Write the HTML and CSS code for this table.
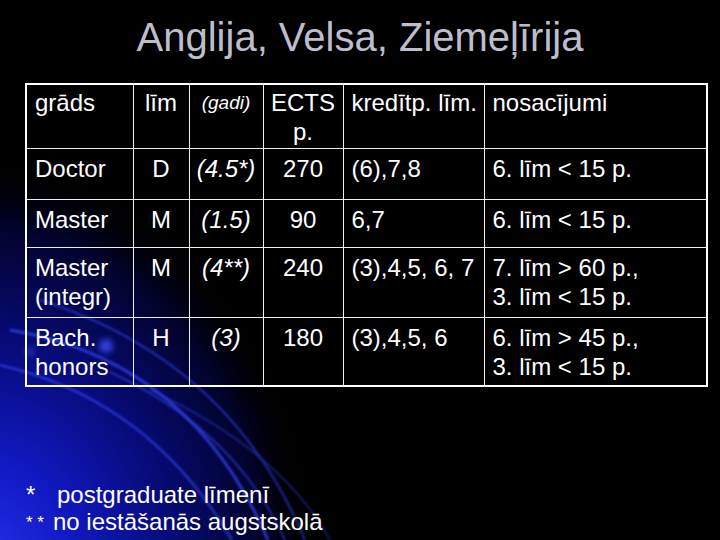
FILE: index.html
```html
<!DOCTYPE html>
<html lang="lv">
<head>
<meta charset="utf-8">
<title>Anglija, Velsa, Ziemeļīrija</title>
<link rel="stylesheet" href="styles.css">
</head>
<body>
<div class="slide">
  <svg class="backdrop" width="720" height="540" viewBox="0 0 720 540" aria-hidden="true">
    <defs>
      <radialGradient id="glow" cx="-20" cy="580" r="420" gradientUnits="userSpaceOnUse" gradientTransform="translate(-20 580) scale(0.8 1) translate(20 -580)">
        <stop offset="0" stop-color="#2a34f0"/>
        <stop offset="0.3" stop-color="#1018c0"/>
        <stop offset="0.6" stop-color="#060a70"/>
        <stop offset="0.85" stop-color="#02032a"/>
        <stop offset="1" stop-color="#000000" stop-opacity="0"/>
      </radialGradient>
      <filter id="soft" x="-20%" y="-20%" width="140%" height="140%">
        <feGaussianBlur stdDeviation="0.8"/>
      </filter>
      <filter id="blob" x="-100%" y="-100%" width="300%" height="300%">
        <feGaussianBlur stdDeviation="3"/>
      </filter>
    </defs>
    <rect width="720" height="540" fill="#000"/>
    <rect width="720" height="540" fill="url(#glow)"/>
    <g fill="none" stroke="#3040e8" filter="url(#soft)">
      <path d="M 10 330 Q 190 360 268 540" stroke-width="3" opacity="0.8"/>
      <path d="M 40 300 Q 230 360 305 540" stroke-width="2" opacity="0.65"/>
      <path d="M 0 365 Q 150 400 232 540" stroke-width="2.5" opacity="0.7"/>
      <path d="M 110 372 Q 235 430 285 540" stroke-width="2" opacity="0.6"/>
      <path d="M 150 390 Q 280 450 330 540" stroke-width="1.5" opacity="0.55"/>
    </g>
    <circle cx="106" cy="346" r="7" fill="#3848f0" filter="url(#blob)" opacity="0.9"/>
    <circle cx="30" cy="352" r="5" fill="#3040e0" filter="url(#blob)" opacity="0.6"/>
  </svg>

  <div class="content">
    <h1 class="title">Anglija, Velsa, Ziemeļīrija</h1>

    <table class="grid">
      <colgroup>
        <col class="c1"><col class="c2"><col class="c3"><col class="c4"><col class="c5"><col class="c6">
      </colgroup>
      <tr class="r-head">
        <td>grāds</td>
        <td class="center">līm</td>
        <td class="center"><span class="small">(gadi)</span></td>
        <td class="center">ECTS<br>p.</td>
        <td>kredītp. līm.</td>
        <td>nosacījumi</td>
      </tr>
      <tr class="r-doc">
        <td>Doctor</td>
        <td class="center">D</td>
        <td class="center ital">(4.5*)</td>
        <td class="center">270</td>
        <td>(6),7,8</td>
        <td>6. līm &lt; 15 p.</td>
      </tr>
      <tr class="r-mas">
        <td>Master</td>
        <td class="center">M</td>
        <td class="center ital">(1.5)</td>
        <td class="center">90</td>
        <td>6,7</td>
        <td>6. līm &lt; 15 p.</td>
      </tr>
      <tr class="r-int">
        <td>Master<br>(integr)</td>
        <td class="center">M</td>
        <td class="center ital">(4**)</td>
        <td class="center">240</td>
        <td>(3),4,5, 6, 7</td>
        <td>7. līm &gt; 60 p.,<br>3. līm &lt; 15 p.</td>
      </tr>
      <tr class="r-bach">
        <td>Bach.<br>honors</td>
        <td class="center">H</td>
        <td class="center ital">(3)</td>
        <td class="center">180</td>
        <td>(3),4,5, 6</td>
        <td>6. līm &gt; 45 p.,<br>3. līm &lt; 15 p.</td>
      </tr>
    </table>

    <div class="notes">
      <p class="note"><span class="mark">*</span>postgraduate līmenī</p>
      <p class="note"><span class="mark-sm">* *</span>no iestāšanās augstskolā</p>
    </div>
  </div>
</div>
</body>
</html>
```

FILE: styles.css
```css
html, body {
  margin: 0;
  padding: 0;
  background: #000;
}

.slide {
  position: relative;
  width: 720px;
  height: 540px;
  overflow: hidden;
  font-family: "Liberation Sans", Arial, sans-serif;
  color: #fff;
}

.backdrop {
  position: absolute;
  left: 0;
  top: 0;
  z-index: 0;
}

.content {
  position: relative;
  z-index: 1;
  display: flex;
  flex-direction: column;
}

.title {
  margin: 14px 0 0 0;
  height: 46px;
  font-size: 40px;
  line-height: 46px;
  font-weight: normal;
  text-align: center;
  color: #bdbdcc;
}

.grid {
  margin: 23px 0 0 25px;
  width: 683px;
  table-layout: fixed;
  border-collapse: collapse;
  border: 2px solid #fff;
  font-size: 24px;
  line-height: 29px;
}

.c1 { width: 107px; }
.c2 { width: 56px; }
.c3 { width: 74px; }
.c4 { width: 80px; }
.c5 { width: 141px; }
.c6 { width: 223px; }

.grid td {
  border: 1px solid #f0f0f0;
  padding: 5px 4px 0 8px;
  vertical-align: top;
  white-space: nowrap;
}

.grid td.center {
  text-align: center;
  padding-left: 2px;
  padding-right: 2px;
}

.grid .r-head td { padding-top: 3px; }

.r-head { height: 64px; }
.r-doc { height: 51px; }
.r-mas { height: 48px; }
.r-int { height: 70px; }
.r-bach { height: 69px; }

.ital { font-style: italic; }

.small {
  font-size: 19px;
  font-style: italic;
  vertical-align: 4px;
}

.notes {
  margin: 94px 0 0 26px;
  font-size: 24px;
  line-height: 27px;
}

.note {
  margin: 0;
  white-space: nowrap;
}

.mark {
  display: inline-block;
  width: 31px;
}

.mark-sm {
  display: inline-block;
  width: 27px;
  font-size: 17px;
  vertical-align: 2px;
}
```
